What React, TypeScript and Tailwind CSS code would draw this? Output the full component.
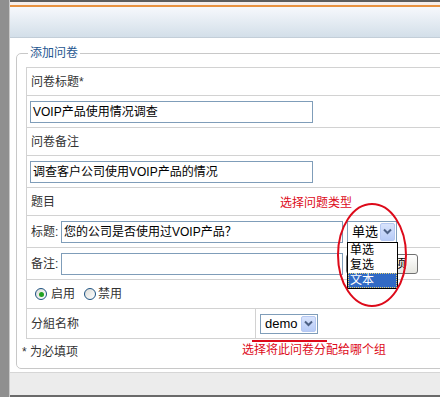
const line = "border-[#d2d2d2]";

function Chevron() {
  return (
    <svg width="9" height="7" viewBox="0 0 9 7" fill="none">
      <path d="M1 1.5 L4.5 5 L8 1.5" stroke="#4d6185" strokeWidth="2" />
    </svg>
  );
}

function Combo({ value, width }: { value: string; width: string }) {
  return (
    <div className={`flex h-[22px] ${width} shrink-0 items-center border border-[#7f9db9] bg-white`}>
      <span className="flex-1 pl-[4px] text-[13px] text-black">{value}</span>
      <span className="m-[1px] flex h-[18px] w-[15px] items-center justify-center rounded-[2px] border border-[#b5c8f2] bg-gradient-to-b from-[#d8e3fc] to-[#b7cbf7]">
        <Chevron />
      </span>
    </div>
  );
}

function Radio({ checked }: { checked?: boolean }) {
  return (
    <span className="flex h-[12px] w-[12px] items-center justify-center rounded-full border border-[#1c5180] bg-gradient-to-br from-[#dcdcd7] to-white">
      {checked && <span className="h-[5px] w-[5px] rounded-full bg-[#21a121]" />}
    </span>
  );
}

export default function App() {
  return (
    <div className="relative flex h-[397px] w-[440px] overflow-hidden bg-white font-['Liberation_Sans','Noto_Sans_CJK_SC',sans-serif] text-[12px] leading-[16px] text-[#333]">
      {/* left frame */}
      <div className="w-[10px] shrink-0 border-r border-[#c9c9c9] bg-[#8f8f8f]" />

      <div className="flex min-w-0 flex-1 flex-col">
        {/* header */}
        <div className="h-[2px] bg-[#5c5c5c]" />
        <div className="h-[3px] bg-[#f7eee9]" />
        <div className="h-[2px] bg-[#e8923f]" />
        <div className="h-[31px] border-b border-[#c3ced8] bg-gradient-to-b from-[#f6f8fc] to-[#d3dfe9]" />

        {/* form */}
        <div className="h-[334px] overflow-hidden pl-[6px] pt-[7px]">
          <fieldset className="w-[600px] rounded-[5px] border border-[#c8c8c8] pb-[8px] pl-[5px]">
            <legend className="ml-[6px] px-[2px] text-[#1f5690]">添加问卷</legend>

            <div className={`ml-[4px] mt-[6px] border-l border-t ${line}`}>
              <div className={`flex h-[28px] items-center border-b ${line} pl-[4px]`}>问卷标题*</div>
              <div className={`flex h-[32px] items-center border-b ${line} pl-[3px]`}>
                <div className="flex h-[22px] w-[283px] items-center border border-[#7f9db9] px-[2px] text-black">VOIP产品使用情况调查</div>
              </div>
              <div className={`flex h-[28px] items-center border-b ${line} pl-[4px]`}>问卷备注</div>
              <div className={`flex h-[32px] items-center border-b ${line} pl-[3px]`}>
                <div className="flex h-[22px] w-[283px] items-center border border-[#7f9db9] px-[2px] text-black">调查客户公司使用VOIP产品的情况</div>
              </div>
              <div className={`flex h-[28px] items-center border-b ${line} pl-[4px]`}>题目</div>
              <div className={`flex h-[32px] items-center border-b ${line} pl-[4px]`}>
                <span className="w-[30px] shrink-0">标题:</span>
                <div className="flex h-[22px] w-[282px] items-center border border-[#7f9db9] px-[2px] text-black">您的公司是否使用过VOIP产品？</div>
                <div className="ml-[4px]">
                  <Combo value="单选" width="w-[50px]" />
                </div>
              </div>
              <div className={`flex h-[32px] items-center border-b ${line} pl-[4px]`}>
                <span className="w-[30px] shrink-0">备注:</span>
                <div className="h-[22px] w-[282px] border border-[#7f9db9]" />
                <button className="ml-[3px] flex h-[20px] w-[72px] items-center justify-center rounded-[3px] border border-[#707070] bg-gradient-to-b from-white to-[#e6e6e0] text-black">
                  添加选项
                </button>
              </div>
              <div className={`flex h-[29px] items-center border-b ${line} pl-[8px]`}>
                <Radio checked />
                <span className="ml-[4px]">启用</span>
                <span className="ml-[9px]"><Radio /></span>
                <span className="ml-[2px]">禁用</span>
              </div>
              <div className={`flex h-[30px] items-stretch border-b ${line}`}>
                <div className={`flex w-[229px] items-center border-r ${line} pl-[4px]`}>分組名称</div>
                <div className="flex items-center pl-[4px]">
                  <div className="flex h-[20px] w-[58px] items-center border border-[#7f9db9]">
                    <span className="flex-1 pl-[4px] text-[13px] text-black">demo</span>
                    <span className="m-[1px] flex h-[16px] w-[15px] items-center justify-center rounded-[2px] border border-[#b5c8f2] bg-gradient-to-b from-[#d8e3fc] to-[#b7cbf7]">
                      <Chevron />
                    </span>
                  </div>
                </div>
              </div>
            </div>

            <div className="mt-[5px]">* 为必填项</div>
          </fieldset>
        </div>

        {/* footer */}
        <div className="h-[23px] border-t border-[#d6d6d6] bg-[#ececec]" />
        <div className="h-[2px] bg-[#6a6a6a]" />
      </div>

      {/* open dropdown list */}
      <div className="absolute left-[347px] top-[242px] z-10 w-[51px] border border-black bg-white text-black">
        <div className="h-[15px] pl-[2px] leading-[15px]">单选</div>
        <div className="h-[15px] pl-[2px] leading-[15px]">复选</div>
        <div className="h-[15px] border border-dotted border-[#e8d070] bg-[#316ac5] pl-[1px] leading-[13px] text-white">文本</div>
      </div>

      {/* annotations */}
      <svg className="absolute left-[336px] top-[202px] z-20" width="72" height="106" viewBox="0 0 72 106" fill="none">
        <ellipse cx="36" cy="53" rx="34" ry="51" stroke="#dd0a1a" strokeWidth="2" />
      </svg>
      <div className="absolute left-[280px] top-[195px] text-[#dd0a1a]">选择问题类型</div>
      <div className="absolute left-[252px] top-[340px] h-[2px] w-[75px] bg-[#dd0a1a]" />
      <div className="absolute left-[242px] top-[342px] text-[#dd0a1a]">选择将此问卷分配给哪个组</div>
    </div>
  );
}
